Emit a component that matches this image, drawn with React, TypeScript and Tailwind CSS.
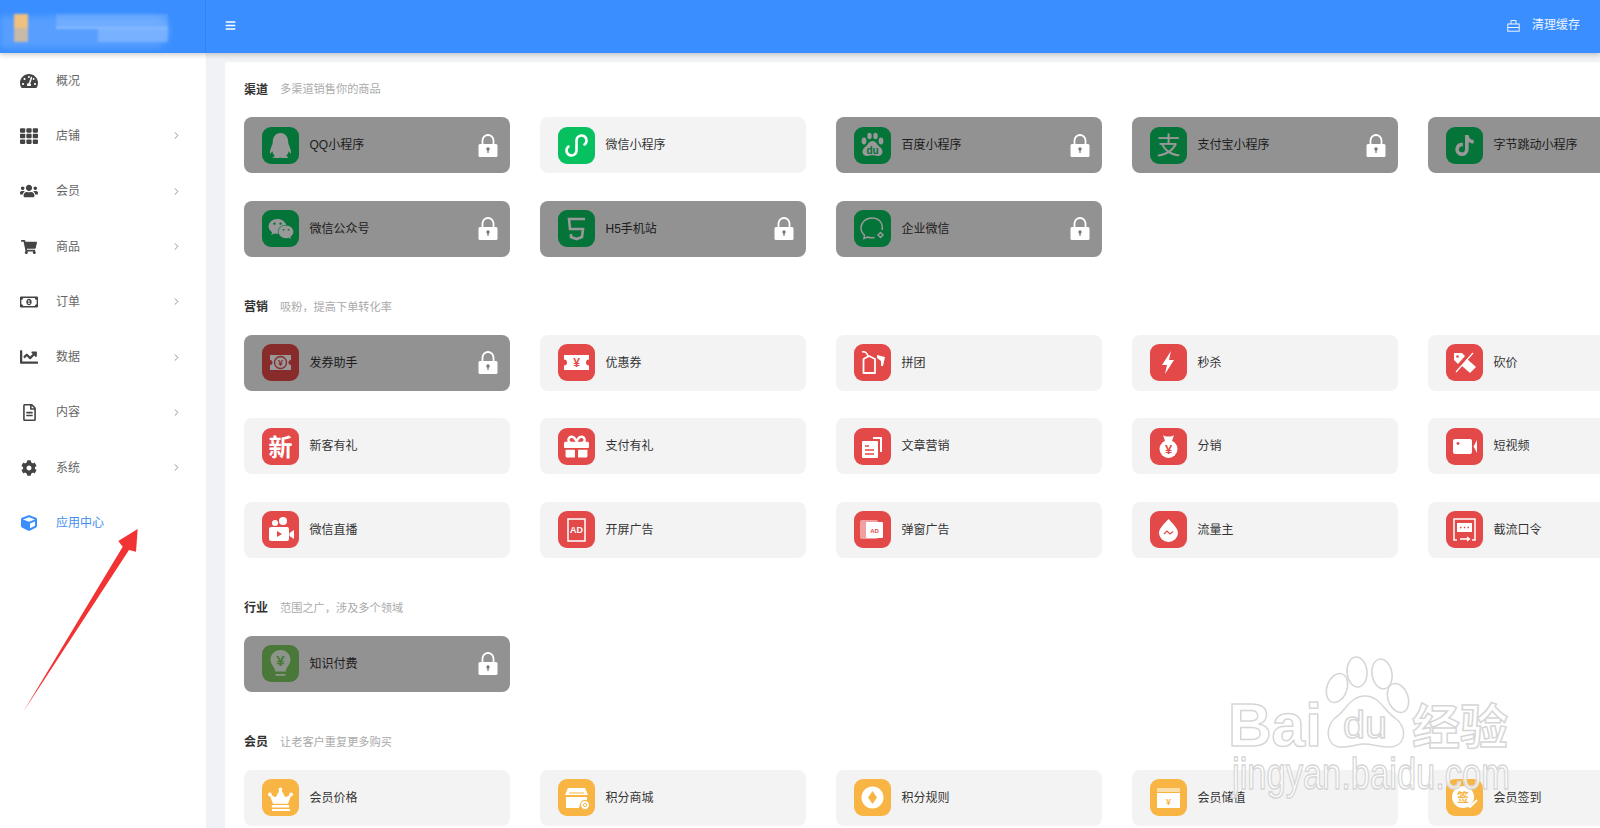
import React from "react";
import { ChevronRight } from "lucide-react";
import {
  FaBars,
  FaChartLine,
  FaCog,
  FaCube,
  FaCrown,
  FaGift,
  FaQq,
  FaRegFileAlt,
  FaRegMoneyBillAlt,
  FaShoppingCart,
  FaTachometerAlt,
  FaTh,
  FaTiktok,
  FaUsers,
  FaWeixin,
} from "react-icons/fa";

const NAVS = [
  { label: "概况", icon: <FaTachometerAlt size={18} />, arrow: false },
  { label: "店铺", icon: <FaTh size={18} />, arrow: true },
  { label: "会员", icon: <FaUsers size={20} />, arrow: true },
  { label: "商品", icon: <FaShoppingCart size={16} />, arrow: true },
  { label: "订单", icon: <FaRegMoneyBillAlt size={18} />, arrow: true },
  { label: "数据", icon: <FaChartLine size={18} />, arrow: true },
  { label: "内容", icon: <FaRegFileAlt size={17} />, arrow: true },
  { label: "系统", icon: <FaCog size={16} />, arrow: true },
  { label: "应用中心", icon: <FaCube size={16} />, arrow: false, active: true },
];

const W = "#fff";
const R = "#e34949";
const Y = "#f8b543";

// every app icon is drawn on a 37x37 canvas
const ICONS: Record<string, React.ReactNode> = {
  mini: (
    <path d="M10.5 19.5A5 5 0 1 0 18.5 23.5V13.5A5 5 0 1 1 26.5 17.5" fill="none" stroke={W} strokeWidth="2.6" strokeLinecap="round" />
  ),
  baidu: (
    <g fill={W}>
      <ellipse cx="10" cy="14" rx="2.4" ry="3.4" />
      <ellipse cx="15.5" cy="9" rx="2.2" ry="3.2" />
      <ellipse cx="21.5" cy="9" rx="2.2" ry="3.2" />
      <ellipse cx="27" cy="14" rx="2.4" ry="3.4" />
      <path d="M18.500 14C22 14 23 18 26 20C30 23 29 29 24 29C22 29 20 28.300 18.500 28.300C17 28.300 15 29 13 29C8 29 7 23 11 20C14 18 15 14 18.500 14Z" />
      <text x="18.500" y="27" textAnchor="middle" fontSize="10" fontWeight="700" fill="#07c160">du</text>
    </g>
  ),
  alipay: (
    <text x="18.500" y="27" textAnchor="middle" fontSize="24" fill={W}>支</text>
  ),
  h5: (
    <path d="M27 9H11L12 19H25L24 27L18.500 29L13 27V24" fill="none" stroke={W} strokeWidth="2.6" />
  ),
  wecom: (
    <g fill="none" stroke={W} strokeWidth="1.500">
      <path d="M28 20C29.500 13 25 8 18 8C11.500 8 7 12.500 7 18C7 21 8.500 23.500 10.500 25L10 28.500L13.500 27C16 28 18.500 28 20.500 27.500" />
      <path d="M26.500 22.500L29 25L26.500 27.500L24 25Z" />
    </g>
  ),
  coupon: (
    <g>
      <path d="M8 11H29V16A2.500 2.500 0 0 0 29 21V26H8V21A2.500 2.500 0 0 0 8 16Z" fill={W} />
      <circle cx="18.500" cy="18.500" r="6" fill="none" stroke={R} strokeWidth="1.400" />
      <text x="18.500" y="22" textAnchor="middle" fontSize="9" fontWeight="700" fill={R}>¥</text>
    </g>
  ),
  ticket: (
    <g>
      <path d="M6 11H31V15.500A3 3 0 0 0 31 21.500V26H6V21.500A3 3 0 0 0 6 15.500Z" fill={W} />
      <text x="18.500" y="23" textAnchor="middle" fontSize="12" fontWeight="700" fill={R}>¥</text>
    </g>
  ),
  group: (
    <g>
      <path d="M23 11L31 13L29 22L27 22V17L23 14Z" fill={W} />
      <path d="M9.500 15L15 12L21 15V29H9.500Z" fill="none" stroke={W} strokeWidth="1.800" strokeLinejoin="round" />
      <path d="M8 8C11 7 13 9 14 12" fill="none" stroke={W} strokeWidth="1.400" />
    </g>
  ),
  bolt: <path d="M21 7L12 21H17L15 30L24 16H19Z" fill={W} />,
  bargain: (
    <g>
      <path d="M8 9H16L19 12L12 20L8 16Z" fill={W} />
      <path d="M21 15L30 23L24 29L16 22Z" fill={W} />
      <path d="M27 9L10 28" stroke={W} strokeWidth="1.200" />
      <circle cx="11.500" cy="12.500" r="1.300" fill={R} />
    </g>
  ),
  xin: (
    <text x="18.500" y="27.500" textAnchor="middle" fontSize="24" fontWeight="700" fill={W}>新</text>
  ),
  article: (
    <g>
      <path d="M19 9H28V24H26V11H19Z" fill={W} />
      <rect x="8" y="13" width="16" height="17" rx="1" fill={W} />
      <path d="M11 18H15M11 22H20M11 26H20" stroke={R} strokeWidth="1.300" />
    </g>
  ),
  bag: (
    <g>
      <path d="M13 7C15 9 22 9 24 7L22 13H15Z" fill={W} />
      <ellipse cx="18.500" cy="21" rx="9" ry="9" fill={W} />
      <text x="18.500" y="26" textAnchor="middle" fontSize="13" fontWeight="700" fill={R}>¥</text>
    </g>
  ),
  video: (
    <g>
      <rect x="7" y="11" width="19" height="15" rx="2" fill={W} />
      <path d="M27.500 18.500L31 12V25Z" fill={W} />
      <circle cx="12" cy="15.500" r="1.400" fill={R} />
    </g>
  ),
  live: (
    <g>
      <circle cx="13" cy="12" r="3" fill={W} />
      <circle cx="21" cy="10" r="4" fill={W} />
      <rect x="7" y="16" width="20" height="14" rx="2" fill={W} />
      <path d="M27.500 22L32 19V28L27.500 25Z" fill={W} />
      <path d="M15 20L20 23L15 26Z" fill={R} />
    </g>
  ),
  ad: (
    <g>
      <rect x="10" y="8" width="17" height="22" fill="none" stroke={W} strokeWidth="1.500" />
      <text x="18.500" y="22" textAnchor="middle" fontSize="9" fontWeight="700" fill={W}>AD</text>
    </g>
  ),
  popup: (
    <g>
      <rect x="6" y="9" width="18" height="19" rx="2" fill="#f0a0a0" />
      <rect x="12" y="11" width="17" height="16" rx="1" fill={W} />
      <text x="20.500" y="21.500" textAnchor="middle" fontSize="6" fontWeight="700" fill={R}>AD</text>
    </g>
  ),
  flow: (
    <g>
      <path d="M18.500 8C22 12 28 17 28 22A9.500 9 0 0 1 9 22C9 17 15 12 18.500 8Z" fill={W} />
      <path d="M14 23L17 20L20 23L23 20.500" fill="none" stroke={R} strokeWidth="1.200" />
    </g>
  ),
  code: (
    <g>
      <path d="M11 29H8V8H29V29H26" fill="none" stroke={W} strokeWidth="1.500" />
      <rect x="11" y="12" width="15" height="9" fill={W} />
      <path d="M14 16.500H15.500M17.800 16.500H19.300M21.500 16.500H23" stroke={R} strokeWidth="1.400" />
      <path d="M14 28H23M21 26L23.500 28L21 30" fill="none" stroke={W} strokeWidth="1.300" />
    </g>
  ),
  bulb: (
    <g>
      <path d="M18.500 5C24.500 5 28.500 9.500 28.500 14.500C28.500 18.500 25.500 21 24 25V26.500H13V25C11.500 21 8.500 18.500 8.500 14.500C8.500 9.500 12.500 5 18.500 5Z" fill={W} fillOpacity="0.85" />
      <rect x="13.500" y="29" width="10" height="1.800" fill={W} fillOpacity="0.85" />
      <text x="18.500" y="20.500" textAnchor="middle" fontSize="15" fontWeight="700" fill="#7ac860">¥</text>
    </g>
  ),
  store: (
    <g>
      <path d="M10 9H27L30 16H7Z" fill={W} />
      <path d="M8 18H29V21A10 10 0 0 0 21 29H8Z" fill={W} />
      <path d="M11 14H26" stroke={Y} strokeWidth="1.200" />
      <circle cx="27" cy="26" r="4.500" fill={W} stroke={Y} strokeWidth="1.200" />
      <circle cx="27" cy="26" r="1.600" fill="none" stroke={Y} strokeWidth="1" />
    </g>
  ),
  rule: (
    <g>
      <circle cx="18.500" cy="18.500" r="11" fill={W} />
      <path d="M18.500 12L23 18.500L18.500 25L14 18.500Z" fill={Y} />
    </g>
  ),
  wallet: (
    <g>
      <path d="M7 9H30V13H7Z" fill={W} fillOpacity="0.55" />
      <rect x="7" y="14" width="23" height="15" fill={W} />
      <text x="18.500" y="25.500" textAnchor="middle" fontSize="9" fontWeight="700" fill={Y}>¥</text>
    </g>
  ),
  sign: (
    <g>
      <circle cx="17" cy="18" r="11" fill={W} />
      <text x="17" y="22.500" textAnchor="middle" fontSize="12" fontWeight="700" fill={Y}>签</text>
      <path d="M21 25L24 28L31 21" fill="none" stroke={W} strokeWidth="2" />
    </g>
  ),
};

const svgIcon = (name: string) => (
  <svg viewBox="0 0 37 37" className="w-full h-full">{ICONS[name]}</svg>
);

const crown = (
  <div className="flex flex-col items-center text-white">
    <FaCrown size={25} />
    <div className="w-[18px] h-[2px] bg-white -mt-[1px]" />
  </div>
);

const G = "bg-[#07c160]";
const D = "bg-[#e34949]";
const O = "bg-[#f8b543]";

type App = { name: string; color: string; icon: React.ReactNode; locked?: boolean };

const SECTIONS: { title: string; desc: string; apps: App[] }[] = [
  {
    title: "渠道",
    desc: "多渠道销售你的商品",
    apps: [
      { name: "QQ小程序", color: G, icon: <FaQq size={25} color="#fff" />, locked: true },
      { name: "微信小程序", color: G, icon: svgIcon("mini") },
      { name: "百度小程序", color: G, icon: svgIcon("baidu"), locked: true },
      { name: "支付宝小程序", color: G, icon: svgIcon("alipay"), locked: true },
      { name: "字节跳动小程序", color: G, icon: <FaTiktok size={21} color="#fff" />, locked: true },
      { name: "微信公众号", color: G, icon: <FaWeixin size={26} color="#fff" />, locked: true },
      { name: "H5手机站", color: G, icon: svgIcon("h5"), locked: true },
      { name: "企业微信", color: G, icon: svgIcon("wecom"), locked: true },
    ],
  },
  {
    title: "营销",
    desc: "吸粉，提高下单转化率",
    apps: [
      { name: "发券助手", color: D, icon: svgIcon("coupon"), locked: true },
      { name: "优惠券", color: D, icon: svgIcon("ticket") },
      { name: "拼团", color: D, icon: svgIcon("group") },
      { name: "秒杀", color: D, icon: svgIcon("bolt") },
      { name: "砍价", color: D, icon: svgIcon("bargain") },
      { name: "新客有礼", color: D, icon: svgIcon("xin") },
      { name: "支付有礼", color: D, icon: <FaGift size={25} color="#fff" /> },
      { name: "文章营销", color: D, icon: svgIcon("article") },
      { name: "分销", color: D, icon: svgIcon("bag") },
      { name: "短视频", color: D, icon: svgIcon("video") },
      { name: "微信直播", color: D, icon: svgIcon("live") },
      { name: "开屏广告", color: D, icon: svgIcon("ad") },
      { name: "弹窗广告", color: D, icon: svgIcon("popup") },
      { name: "流量主", color: D, icon: svgIcon("flow") },
      { name: "截流口令", color: D, icon: svgIcon("code") },
    ],
  },
  {
    title: "行业",
    desc: "范围之广，涉及多个领域",
    apps: [{ name: "知识付费", color: "bg-[#7ac860]", icon: svgIcon("bulb"), locked: true }],
  },
  {
    title: "会员",
    desc: "让老客户重复更多购买",
    apps: [
      { name: "会员价格", color: O, icon: crown },
      { name: "积分商城", color: O, icon: svgIcon("store") },
      { name: "积分规则", color: O, icon: svgIcon("rule") },
      { name: "会员储值", color: O, icon: svgIcon("wallet") },
      { name: "会员签到", color: O, icon: svgIcon("sign") },
    ],
  },
];

const Lock = () => (
  <svg width="20" height="23" viewBox="0 0 20 23">
    <path d="M4.500 11V6.500a5.500 5.500 0 0 1 11 0V11" fill="none" stroke="#fff" strokeWidth="1.800" />
    <rect x="0.500" y="10" width="19" height="13" rx="1.500" fill="#fff" />
    <circle cx="10" cy="15" r="1.700" fill="#777" />
    <rect x="9.400" y="15" width="1.200" height="4" fill="#777" />
  </svg>
);

const AppCard = ({ app }: { app: App }) => (
  <div className="relative h-[56px] rounded-[8px] bg-[#f3f3f3] flex items-center pl-[18px] gap-[10.5px] text-[12px] text-[#333]">
    <div className={`w-[37px] h-[37px] rounded-[9px] flex items-center justify-center shrink-0 overflow-hidden ${app.color}`}>
      {app.icon}
    </div>
    <span>{app.name}</span>
    {app.locked && (
      <div className="absolute inset-0 rounded-[8px] bg-black/40 flex items-center justify-end pr-[12px]">
        <Lock />
      </div>
    )}
  </div>
);

const Logo = () => (
  <div className="relative w-[206px] h-full border-r border-[#3582ea] shrink-0 overflow-hidden">
    <div className="absolute left-0 top-[16px] w-[170px] h-[32px] bg-white/15 rounded-r-full blur-[3px]" />
    <div className="relative flex mt-[14px] ml-[14px] blur-[1px]">
      <div className="w-[14px]">
        <div className="h-[14px] bg-[#efc07f]" />
        <div className="h-[14px] bg-[#c9b9a8]" />
      </div>
      <div className="ml-[28px] w-[112px]">
        <div className="h-[13px] bg-white/15" />
        <div className="h-[2px] bg-white/30" />
        <div className="h-[13px] ml-[42px] bg-white/20" />
      </div>
    </div>
  </div>
);

const Header = () => (
  <header className="relative z-10 h-[53px] flex bg-[#3a8eff] shadow-[0_2px_5px_rgba(0,0,0,0.2)] text-white">
    <Logo />
    <div className="flex-1 flex items-center justify-between pl-[19px] pr-[20px] pb-[3px]">
      <FaBars size={11} />
      <div className="flex items-center gap-[12px] text-[12px] text-white/90">
        <svg width="13" height="13" viewBox="0 0 13 13" fill="none" stroke="currentColor" strokeWidth="1">
          <path d="M4 5V1.500H9V5" />
          <rect x="0.800" y="5" width="11.400" height="7.200" />
          <path d="M1 8.500H12" />
        </svg>
        <span>清理缓存</span>
      </div>
    </div>
  </header>
);

const Sidebar = () => (
  <aside className="w-[206px] shrink-0 bg-white">
    {NAVS.map((nav) => (
      <div
        key={nav.label}
        className={`h-[55.3px] flex items-center pl-[20px] pr-[24px] text-[12px] ${nav.active ? "text-[#3e8ef0]" : "text-[#666]"}`}
      >
        <span className={`w-[18px] mr-[18px] flex justify-center ${nav.active ? "text-[#3a8eff]" : "text-[#444]"}`}>
          {nav.icon}
        </span>
        <span className="flex-1">{nav.label}</span>
        {nav.arrow && <ChevronRight size={11} className="text-[#888]" />}
      </div>
    ))}
  </aside>
);

const Annotations = () => (
  <>
    <svg className="absolute left-0 top-0 z-20" width="160" height="828" viewBox="0 0 160 828">
      <polygon points="23.300,711.700 122.700,546.700 118.300,541 137.700,529 136,551.700 129,550" fill="#f23333" />
    </svg>
    <svg
      className="absolute left-[1220px] top-[650px] z-20"
      width="300"
      height="178"
      viewBox="0 0 300 178"
      fill="#fff"
      fillOpacity="0.75"
      stroke="#d6d6d6"
      strokeWidth="1.500"
    >
      <text x="8" y="96" fontSize="62" fontWeight="700" textLength="94" lengthAdjust="spacingAndGlyphs">Bai</text>
      <ellipse cx="117" cy="38" rx="10" ry="15" transform="rotate(20 117 38)" />
      <ellipse cx="137" cy="22" rx="10" ry="15" transform="rotate(-5 137 22)" />
      <ellipse cx="162" cy="24" rx="10" ry="15" transform="rotate(-10 162 24)" />
      <ellipse cx="178" cy="48" rx="10" ry="15" transform="rotate(-20 178 48)" />
      <path d="M145 46C160 46 165 62 175 68C187 76 188 97 168 97C158 97 152 94 145 94C138 94 130 97 122 97C105 97 105 76 115 68C125 62 130 46 145 46Z" />
      <text x="123" y="88" fontSize="38" textLength="44" lengthAdjust="spacingAndGlyphs">du</text>
      <text x="192" y="94" fontSize="48" fontWeight="700" textLength="96" lengthAdjust="spacingAndGlyphs">经验</text>
      <text x="12" y="139" fontSize="45" textLength="278" lengthAdjust="spacingAndGlyphs">jingyan.baidu.com</text>
    </svg>
  </>
);

export default function App() {
  return (
    <div className="relative w-[1600px] h-[828px] overflow-hidden bg-[#f1f2f5] [font-family:'Liberation_Sans','Noto_Sans_CJK_SC',sans-serif]">
      <Header />
      <div className="flex h-[775px]">
        <Sidebar />
        <main className="flex-1 min-w-0 pl-[19px] pt-[9px]">
          <div className="h-full bg-white pl-[19px] pt-[17.5px] overflow-hidden">
            {SECTIONS.map((section) => (
              <section key={section.title} className="mb-[40.5px]">
                <div className="h-[20px] mb-[17.5px] flex items-center gap-[12px]">
                  <span className="text-[12px] font-bold text-[#333]">{section.title}</span>
                  <span className="text-[11.2px] text-[#aaa]">{section.desc}</span>
                </div>
                <div className="grid grid-cols-[repeat(5,266px)] gap-x-[30px] gap-y-[27.5px]">
                  {section.apps.map((app) => (
                    <AppCard key={app.name} app={app} />
                  ))}
                </div>
              </section>
            ))}
          </div>
        </main>
      </div>
      <Annotations />
    </div>
  );
}
